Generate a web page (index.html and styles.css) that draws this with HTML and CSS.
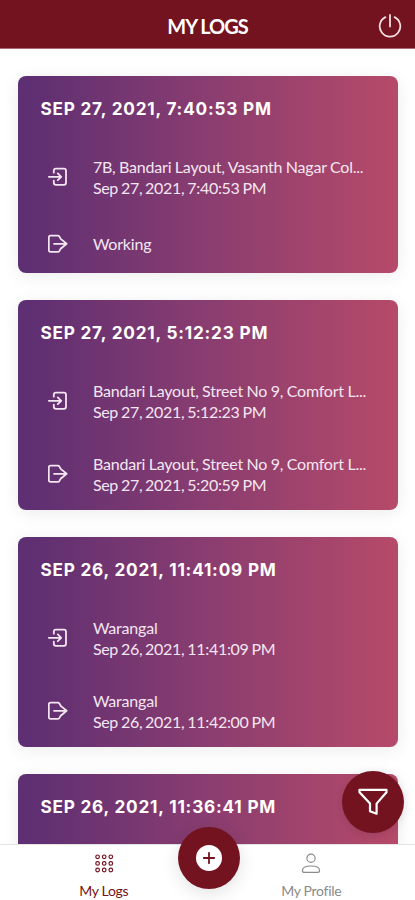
FILE: index.html
```html
<!DOCTYPE html>
<html lang="en">
<head>
<meta charset="utf-8">
<meta name="viewport" content="width=device-width, initial-scale=1">
<title>My Logs</title>
<link rel="stylesheet" href="styles.css">
</head>
<body>
<svg class="sprite" aria-hidden="true">
  <symbol id="enter" viewBox="0 0 20 20">
    <path d="M5.8 5.7V3.7Q5.8 1.7 7.8 1.7H16Q18 1.7 18 3.7V15.8Q18 17.8 16 17.8H7.8Q5.8 17.8 5.8 15.8V13.6M.8 9.8H12.6M9.8 6.4L13.2 9.8L9.8 13.2"/>
  </symbol>
  <symbol id="exit" viewBox="0 0 20 20">
    <path d="M13 5.3L11.4 2.6Q10.8 1.7 9.8 1.7H2.4Q.8 1.7 .8 3.3V16.2Q.8 17.8 2.4 17.8H9.8Q10.8 17.8 11.4 16.9L13 14.2M6 9.8H18M13.6 5.6L18.6 9.8L13.6 14"/>
  </symbol>
</svg>
<div class="app">
  <header class="topbar">
    <h1>MY LOGS</h1>
    <button class="power" aria-label="Log out">
      <svg viewBox="0 0 24 24"><path d="M12 1v11.5M7.4 3.1A10.3 10.3 0 1 0 16.6 3.1"/></svg>
    </button>
  </header>
  <main class="logs">
    <article class="card">
      <h2>SEP 27, 2021, 7:40:53 PM</h2>
      <div class="entry"><svg><use href="#enter"/></svg><div><p class="place">7B, Bandari Layout, Vasanth Nagar Col...</p><p class="time">Sep 27, 2021, 7:40:53 PM</p></div></div>
      <div class="entry"><svg><use href="#exit"/></svg><div><p>Working</p></div></div>
    </article>
    <article class="card">
      <h2>SEP 27, 2021, 5:12:23 PM</h2>
      <div class="entry"><svg><use href="#enter"/></svg><div><p class="place">Bandari Layout, Street No 9, Comfort L...</p><p class="time">Sep 27, 2021, 5:12:23 PM</p></div></div>
      <div class="entry"><svg><use href="#exit"/></svg><div><p class="place">Bandari Layout, Street No 9, Comfort L...</p><p class="time">Sep 27, 2021, 5:20:59 PM</p></div></div>
    </article>
    <article class="card">
      <h2>SEP 26, 2021, 11:41:09 PM</h2>
      <div class="entry"><svg><use href="#enter"/></svg><div><p>Warangal</p><p class="time">Sep 26, 2021, 11:41:09 PM</p></div></div>
      <div class="entry"><svg><use href="#exit"/></svg><div><p>Warangal</p><p class="time">Sep 26, 2021, 11:42:00 PM</p></div></div>
    </article>
    <article class="card last">
      <h2>SEP 26, 2021, 11:36:41 PM</h2>
    </article>
  </main>
  <button class="fab filter" aria-label="Filter">
    <svg viewBox="0 0 30 28"><path d="M1.5 1.8H28.5V4.2L18.6 15.6V25.8L12 23.3V15.6L1.5 4.2Z"/></svg>
  </button>
  <nav class="tabs">
    <a class="tab active">
      <svg viewBox="0 0 20 20"><circle cx="3.6" cy="3.8" r="1.8"/><circle cx="10.2" cy="3.8" r="1.8"/><circle cx="16.8" cy="3.8" r="1.8"/><circle cx="3.6" cy="10.4" r="1.8"/><circle cx="10.2" cy="10.4" r="1.8"/><circle cx="16.8" cy="10.4" r="1.8"/><circle cx="3.6" cy="17" r="1.8"/><circle cx="10.2" cy="17" r="1.8"/><circle cx="16.8" cy="17" r="1.8"/></svg>
      <span>My Logs</span>
    </a>
    <a class="tab">
      <svg viewBox="0 0 20 20"><circle cx="10" cy="5.2" r="4.1"/><path d="M1.4 17.7C1.4 14.6 5 13 10 13S18.6 14.6 18.6 17.7Q18.6 19.4 16.6 19.4H3.4Q1.4 19.4 1.4 17.7Z"/></svg>
      <span>My Profile</span>
    </a>
    <button class="fab add" aria-label="Add log">
      <svg viewBox="0 0 26 26"><circle cx="13" cy="13" r="13"/><path d="M13 7.8V18.2M7.8 13H18.2"/></svg>
    </button>
  </nav>
</div>
</body>
</html>
```
FILE: styles.css
```css
* { box-sizing: border-box; }
body, h1, h2, p { margin: 0; }
body { font-family: Lato, sans-serif; background: #fff; }
button { border: 0; padding: 0; }
svg { display: block; fill: none; stroke: currentColor; stroke-linejoin: round; stroke-linecap: round; }
.sprite { display: none; }

.app { position: relative; height: 900px; display: flex; flex-direction: column; overflow: hidden; }

.topbar {
  flex: none;
  height: 49px;
  padding-top: 3px;
  display: grid;
  grid-template-columns: 50px 1fr 50px;
  align-items: center;
  background: #731320;
  border-bottom: 1px solid #a56c73;
  color: #fff;
}
.topbar h1 { grid-column: 2; text-align: center; font-size: 20px; font-weight: 700; letter-spacing: -1px; line-height: 46px; }
.power { background: none; color: #f3dfe0; justify-self: center; }
.power svg { width: 24px; height: 24px; stroke-width: 1.8; }

.logs { flex: 1; min-height: 0; overflow: hidden; padding: 27px 17.5px 0 18.4px; display: flex; flex-direction: column; gap: 27px; }

.card {
  flex: none;
  padding: 21px 22px 15px;
  border-radius: 8px;
  background: linear-gradient(90deg, #5e2f72 3%, #8a3d70 50%, #b64a69 100%);
  box-shadow: 0 3px 18px rgba(0, 0, 0, .08);
  color: #fff;
}
.card.last { height: 210px; }
.card h2 { font: 700 17.2px/24px Inter, sans-serif; letter-spacing: .8px; white-space: nowrap; margin-bottom: 35px; }
.entry { display: flex; align-items: center; min-height: 29px; padding-left: 8px; color: #f4e6f1; }
.entry + .entry { margin-top: 31px; }
.entry svg { flex: none; width: 20px; height: 20px; margin-right: 24.5px; stroke-width: 1.8; }
.entry p { font-size: 16px; line-height: 21px; white-space: nowrap; letter-spacing: -.2px; }
.entry .place { word-spacing: -.4px; }
.entry .time { letter-spacing: -.3px; word-spacing: -.9px; }

.fab { position: absolute; display: grid; place-items: center; width: 62px; height: 62px; border-radius: 50%; background: #731320; color: #fff; }
.filter { right: 11px; bottom: 67px; box-shadow: 0 2px 8px rgba(0, 0, 0, .12); }
.filter svg { width: 30px; height: 28px; stroke-width: 2.2; }

.tabs { position: relative; flex: none; height: 56px; display: grid; grid-template-columns: 1fr 1fr; background: #fff; border-top: 1px solid #e4e4e4; }
.tab { display: flex; flex-direction: column; align-items: center; padding-top: 8px; color: #8b8b8b; font-size: 14px; line-height: 18px; letter-spacing: -.3px; }
.tab svg { width: 20px; height: 20px; stroke-width: 1.2; margin-bottom: 9px; }
.active { color: #731320; }
.add { left: 177.5px; bottom: 11px; box-shadow: 0 4px 18px rgba(0, 0, 0, .12); }
.add svg { width: 26px; height: 26px; stroke-width: 1.8; }
.add circle { fill: #fff; stroke: none; }
.add path { stroke: #731320; }
```
